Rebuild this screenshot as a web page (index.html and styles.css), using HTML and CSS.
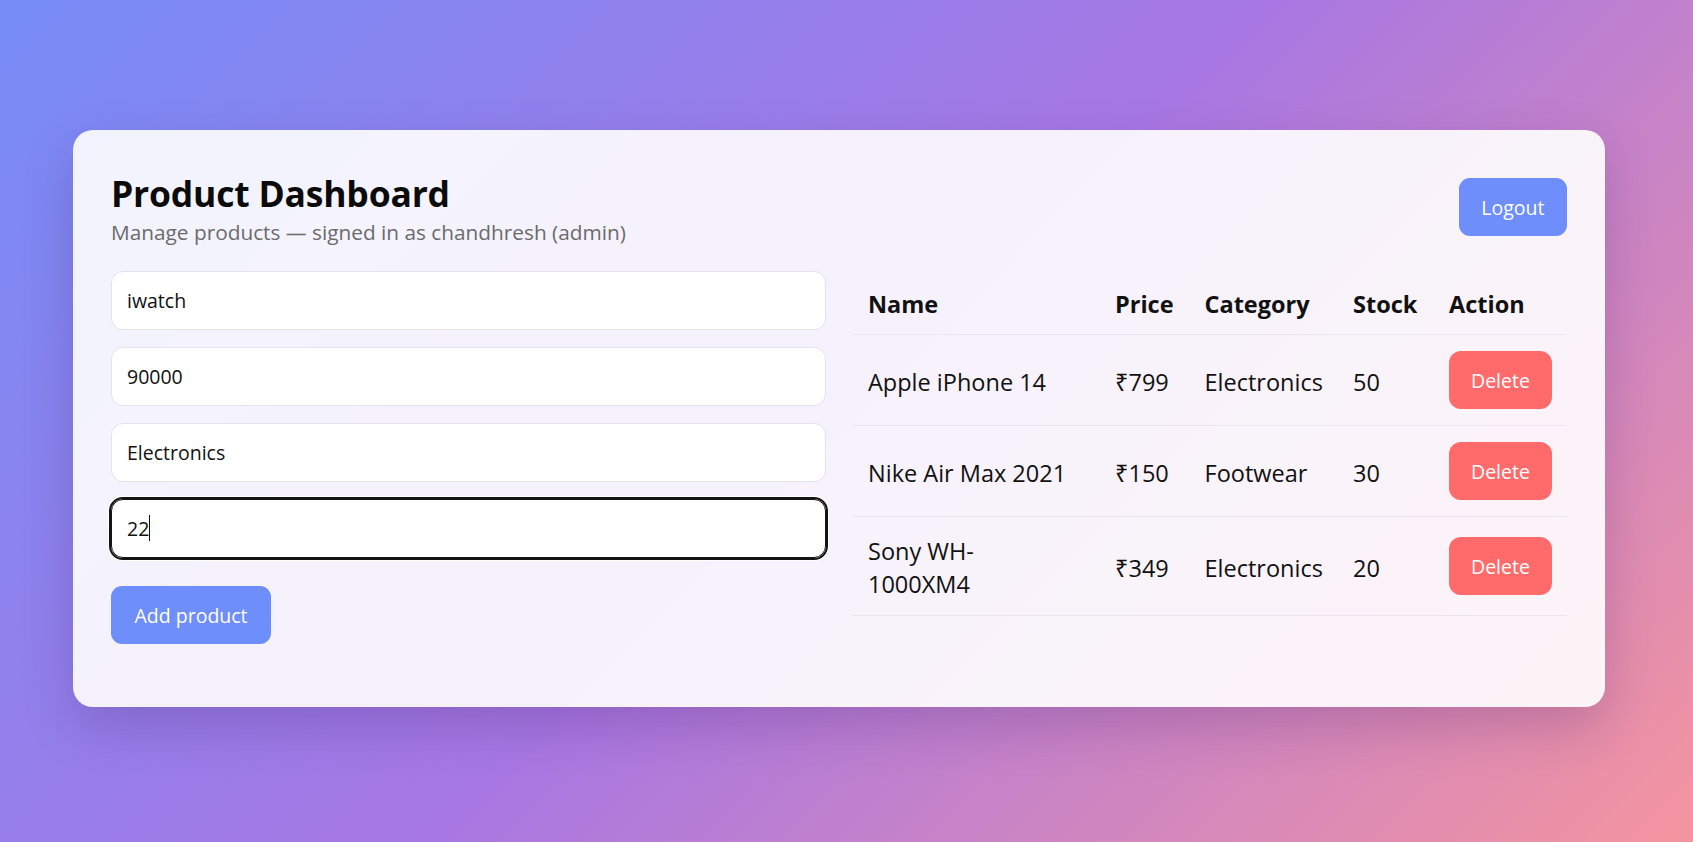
FILE: index.html
```html
<!DOCTYPE html>
<html lang="en">
<head>
<meta charset="utf-8">
<title>Product Dashboard</title>
<link rel="stylesheet" href="styles.css">
</head>
<body>
<main class="page">
  <section class="card">
    <header class="card-header">
      <div class="heading">
        <h1 class="title">Product Dashboard</h1>
        <p class="subtitle">Manage products — signed in as chandhresh (admin)</p>
      </div>
      <button class="btn btn-primary btn-logout" type="button">Logout</button>
    </header>

    <div class="content">
      <form class="product-form">
        <input class="field" type="text" value="iwatch">
        <input class="field" type="number" value="90000">
        <input class="field" type="text" value="Electronics">
        <div class="field-wrap">
          <input class="field is-focused" type="number" value="22">
          <span class="caret"></span>
        </div>
        <button class="btn btn-primary btn-add" type="button">Add product</button>
      </form>

      <table class="products">
        <colgroup>
          <col class="col-name">
          <col class="col-price">
          <col class="col-category">
          <col class="col-stock">
          <col class="col-action">
        </colgroup>
        <thead>
          <tr>
            <th>Name</th>
            <th>Price</th>
            <th>Category</th>
            <th>Stock</th>
            <th>Action</th>
          </tr>
        </thead>
        <tbody>
          <tr>
            <td class="cell-name">Apple iPhone 14</td>
            <td>₹799</td>
            <td>Electronics</td>
            <td>50</td>
            <td class="cell-action"><button class="btn btn-danger" type="button">Delete</button></td>
          </tr>
          <tr>
            <td class="cell-name">Nike Air Max 2021</td>
            <td>₹150</td>
            <td>Footwear</td>
            <td>30</td>
            <td class="cell-action"><button class="btn btn-danger" type="button">Delete</button></td>
          </tr>
          <tr>
            <td class="cell-name">Sony WH-1000XM4</td>
            <td>₹349</td>
            <td>Electronics</td>
            <td>20</td>
            <td class="cell-action"><button class="btn btn-danger" type="button">Delete</button></td>
          </tr>
        </tbody>
      </table>
    </div>
  </section>
</main>
</body>
</html>
```

FILE: styles.css
```css
* {
  box-sizing: border-box;
}

html, body {
  margin: 0;
  padding: 0;
}

body {
  min-height: 100vh;
  font-family: "Open Sans", "Noto Sans", sans-serif;
  color: #111;
  background: linear-gradient(135deg, #768cf7 0%, #a777e3 50%, #f4949f 100%);
}

.page {
  padding: 130px 88px 135px 73px;
}

.card {
  background: rgba(255, 255, 255, 0.9);
  border-radius: 20px;
  padding: 38px;
  box-shadow: 0 20px 50px rgba(60, 25, 100, 0.22);
}

.card-header {
  display: flex;
  align-items: center;
  justify-content: space-between;
  margin-bottom: 25px;
}

.title {
  margin: 0;
  font-size: 35.5px;
  line-height: 50px;
  font-weight: 700;
  color: #0b0b0b;
  letter-spacing: -0.2px;
}

.subtitle {
  margin: 0;
  font-size: 20.8px;
  line-height: 28px;
  color: #6b6b6b;
}

.btn {
  display: inline-flex;
  align-items: center;
  justify-content: center;
  height: 58px;
  padding: 0 22.5px;
  border: none;
  border-radius: 11px;
  font-family: inherit;
  font-size: 19.5px;
  color: #fff;
  cursor: pointer;
}

.btn-primary {
  background: #6e8efb;
}

.btn-danger {
  background: #ff6b6b;
  padding: 0 22px;
  border-radius: 12px;
}

.content {
  display: grid;
  grid-template-columns: 1fr 1fr;
  column-gap: 26px;
  align-items: start;
}

.product-form {
  display: flex;
  flex-direction: column;
  gap: 17px;
  padding-bottom: 25px;
}

.field {
  display: block;
  width: 100%;
  height: 59px;
  padding: 0 15px;
  border: 1px solid #e4e2ee;
  border-radius: 12px;
  background: #fff;
  font-family: inherit;
  font-size: 19.5px;
  color: #111;
  -moz-appearance: textfield;
}

.field::-webkit-outer-spin-button,
.field::-webkit-inner-spin-button {
  -webkit-appearance: none;
  margin: 0;
}

.field-wrap {
  position: relative;
}

.field.is-focused {
  border-color: #141414;
  outline: 2px solid #141414;
  outline-offset: 0;
  box-shadow: 0 0 0 3px #fff;
}

.caret {
  position: absolute;
  left: 38px;
  top: 16px;
  width: 1px;
  height: 26px;
  background: #111;
}

.btn-add {
  align-self: flex-start;
  margin-top: 11px;
  padding: 0 23.5px;
}

.products {
  width: 100%;
  border-collapse: collapse;
  table-layout: fixed;
  font-size: 23.5px;
  line-height: 32px;
  color: #111;
}

.col-name { width: 247px; }
.col-price { width: 89.5px; }
.col-category { width: 148.5px; }
.col-stock { width: 96px; }
.col-action { width: 134px; }

.products th {
  text-align: left;
  font-weight: 700;
  padding: 17px 16px 14px;
  border-bottom: 1px solid #ebe7f0;
  white-space: nowrap;
}

.products td {
  padding: 18px 15px 14px 16px;
  border-bottom: 1px solid #ebe7f0;
  vertical-align: middle;
}

.products td.cell-name {
  padding-right: 28px;
  line-height: 33px;
}

.products td.cell-action {
  padding-top: 16px;
  padding-bottom: 16px;
}
```
